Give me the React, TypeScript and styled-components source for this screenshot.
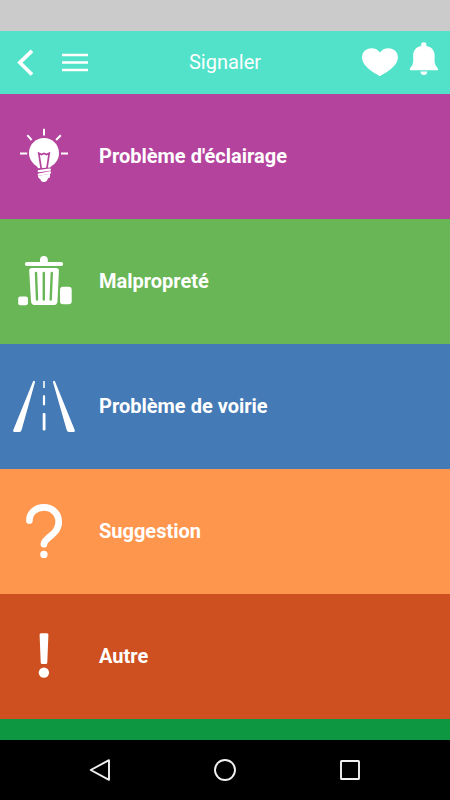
import React from "react";
import styled, { createGlobalStyle } from "styled-components";

const GlobalStyle = createGlobalStyle`
  * { box-sizing: border-box; }
  body { margin: 0; background: #000; font-family: Roboto, sans-serif; }
`;

const Screen = styled.main`
  width: 450px;
  height: 800px;
  display: flex;
  flex-direction: column;
  overflow: hidden;
`;

const StatusBar = styled.div`
  height: 31px;
  flex: none;
  background: #cbcbcb;
`;

const Header = styled.header`
  height: 63px;
  flex: none;
  display: grid;
  grid-template-columns: 100px 1fr 100px;
  background: #51e2c9;
  color: #fff;
`;

const HeaderActions = styled.div`
  display: flex;
`;

const HeaderButton = styled.button`
  width: 50px;
  height: 63px;
  padding: 0;
  border: 0;
  background: none;
  svg { display: block; }
`;

const Title = styled.h1`
  margin: 0;
  font-size: 20px;
  font-weight: 400;
  line-height: 62px;
  text-align: center;
`;

const List = styled.div`
  flex: 1;
  background: #0d9740;
`;

const Row = styled.button<{ $color: string }>`
  width: 100%;
  height: 125px;
  padding: 0;
  border: 0;
  display: flex;
  align-items: center;
  gap: 9px;
  background: ${(p) => p.$color};
  color: #fff;
  font: 700 20px/24px Roboto, sans-serif;
  text-align: left;
`;

const RowIcon = styled.svg`
  width: 90px;
  height: 125px;
  flex: none;
  fill: #fff;
`;

const Label = styled.span`
  padding-bottom: 1px;
`;

const NavBar = styled.nav`
  height: 60px;
  flex: none;
  display: flex;
  justify-content: center;
  gap: 101px;
  align-items: center;
  background: #000;
  svg { width: 24px; height: 24px; fill: none; stroke: #f2f2f2; stroke-width: 1.9; }
`;

const Bulb = ({ color }: { color: string }) => (
  <RowIcon viewBox="0 0 90 125">
    <path d="M44 44C35.5 44 29 50.7 29 59C29 65 32.5 69.5 36.5 72Q38 73 38 75H50Q50 73 51.5 72C56 69.5 59 65 59 59C59 50.7 52.5 44 44 44Z" />
    <path d="M41.2 74.6L38.8 59.2L41.5 60.6L44 59.4L46.5 60.6L49.2 59.2L46.9 74.6" fill="none" stroke={color} strokeWidth="1.7" />
    <path d="M44 34.8V41.6M27.3 41.2L31.6 46M60.8 41.2L56.1 46M20 59.4H27.2M61 59.4H68" fill="none" stroke="#fff" strokeWidth="2" />
    <path d="M37 74.2L51 73.4V75.4L37 77Z" fill={color} />
    <path d="M38.8 77.2L49.8 75.7M38.8 80.7L50 78.5" fill="none" stroke="#fff" strokeWidth="2.3" strokeLinecap="round" />
    <path d="M38 82L50 79.7V82.5Q50 84 48 84.2C47.5 86.5 46 88 44 88C42 88 40.7 87 40.2 84.9Q38 84.5 38 82Z" />
  </RowIcon>
);

const Trash = ({ color }: { color: string }) => (
  <RowIcon viewBox="0 0 90 125">
    <rect x="25" y="43" width="38" height="4" rx="1.8" />
    <path d="M40 43V41Q40 37 43.8 37Q47.8 37 47.8 41V43Z" />
    <path d="M32 49H56Q59 49 58.9 52L57.5 82Q57.3 86 54 86H34.5Q31.2 86 31 82L29.2 52Q29 49 32 49Z" />
    <path d="M36 54L37 80.5M43.8 54V80.5M51.8 54L50.7 80.5" fill="none" stroke={color} strokeWidth="2.4" strokeLinecap="round" />
    <rect x="18.2" y="77.5" width="9.7" height="8.8" rx="2" />
    <rect x="60" y="67.8" width="11.7" height="17.4" rx="3" />
  </RowIcon>
);

const Road = () => (
  <RowIcon viewBox="0 0 90 125">
    <path d="M33.2 37Q35.3 36.2 34.9 38.5L21.6 86Q21 87.9 19.4 87.9H14.5Q12.5 87.9 13.4 85.7Z" />
    <path d="M54.8 37Q52.7 36.2 53.1 38.5L66.7 86Q67.3 87.9 68.9 87.9H73.4Q75.5 87.9 74.6 85.7Z" />
    <rect x="43.1" y="37" width="1.8" height="7" opacity=".85" />
    <rect x="42.9" y="51.3" width="2.2" height="10" rx=".6" />
    <rect x="42.7" y="69" width="2.8" height="17.6" rx="1.1" />
  </RowIcon>
);

const Question = () => (
  <RowIcon viewBox="0 0 90 125">
    <path d="M29.4 51.5C29.4 43.8 36 38.4 43.9 38.4C52.3 38.4 58.7 44.6 58.7 52.8C58.7 61 53.3 64.7 49 68.4C46.4 70.7 44.1 72 43.9 75.2" fill="none" stroke="#fff" strokeWidth="6.7" strokeLinecap="round" />
    <circle cx="43.9" cy="85.4" r="3.7" />
  </RowIcon>
);

const Exclamation = () => (
  <RowIcon viewBox="0 0 90 125">
    <path d="M41 39.2H47Q48.5 39.2 48.4 40.8L47.3 68.5Q47.2 70.1 45.8 70.1H42.2Q40.8 70.1 40.7 68.5L39.6 40.8Q39.5 39.2 41 39.2Z" />
    <circle cx="43.9" cy="78.6" r="5.2" />
  </RowIcon>
);

const categories = [
  { label: "Problème d'éclairage", color: "#b4439d", Icon: Bulb },
  { label: "Malpropreté", color: "#69b656", Icon: Trash },
  { label: "Problème de voirie", color: "#447ab5", Icon: Road },
  { label: "Suggestion", color: "#ff964d", Icon: Question },
  { label: "Autre", color: "#ce5020", Icon: Exclamation },
];

export default function App() {
  return (
    <Screen>
      <GlobalStyle />
      <StatusBar />
      <Header>
        <HeaderActions>
          <HeaderButton aria-label="Retour">
            <svg width="50" height="63"><path d="M32 19.8L19.8 31.6L32 43.5" fill="none" stroke="#fff" strokeWidth="3.7" /></svg>
          </HeaderButton>
          <HeaderButton aria-label="Menu">
            <svg width="50" height="63"><path d="M12 24H38M12 31.5H38M12 39H38" stroke="#fff" strokeWidth="2.5" /></svg>
          </HeaderButton>
        </HeaderActions>
        <Title>Signaler</Title>
        <HeaderActions>
          <HeaderButton aria-label="Favoris">
            <svg width="50" height="63" fill="#fff"><path d="M29.9 45C26 42.8 12 35.5 12 26.4C12 20.7 16.3 17.2 21.3 17.2C25 17.2 28.2 18.8 29.9 21.4C31.7 18.8 35 17.2 38.6 17.2C43.7 17.2 47.9 20.7 47.9 26.4C47.9 35.5 33.8 42.8 29.9 45Z" /></svg>
          </HeaderButton>
          <HeaderButton aria-label="Notifications">
            <svg width="50" height="63" fill="#fff"><path d="M21.2 15V13.5Q21.2 11.2 23.8 11.2Q26.4 11.2 26.4 13.5V15C31.5 15.8 34.5 19.5 34.6 24V31Q34.8 34.7 37.9 37.5V39.3H9.9V37.5Q13 34.7 13.2 31V24C13.3 19.5 16.3 15.8 21.2 15Z" /><path d="M20.4 40.5H27.3Q27 44.1 23.8 44.1Q20.8 44.1 20.4 40.5Z" /></svg>
          </HeaderButton>
        </HeaderActions>
      </Header>
      <List>
        {categories.map(({ label, color, Icon }) => (
          <Row key={label} $color={color}>
            <Icon color={color} />
            <Label>{label}</Label>
          </Row>
        ))}
      </List>
      <NavBar>
        <svg viewBox="0 0 24 24"><path d="M21 2.2V21.8L2.7 12Z" strokeLinejoin="round" /></svg>
        <svg viewBox="0 0 24 24"><circle cx="12" cy="12" r="10" /></svg>
        <svg viewBox="0 0 24 24"><rect x="3" y="3" width="18" height="18" rx=".6" /></svg>
      </NavBar>
    </Screen>
  );
}
